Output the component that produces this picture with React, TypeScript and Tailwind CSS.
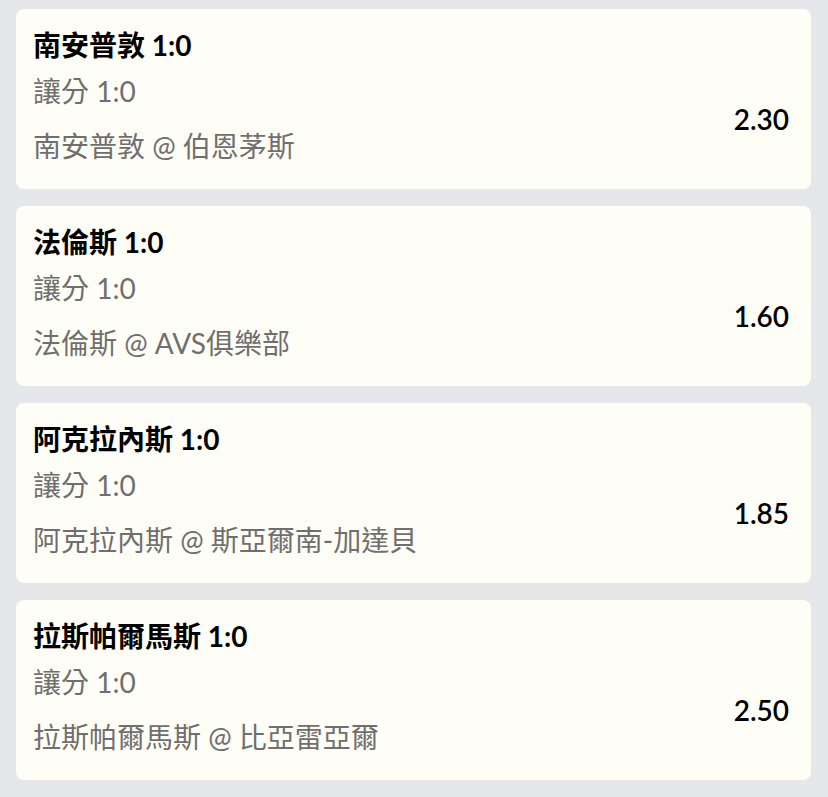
const bets = [
  { title: '南安普敦 1:0', market: '讓分 1:0', match: '南安普敦 @ 伯恩茅斯', odds: '2.30' },
  { title: '法倫斯 1:0', market: '讓分 1:0', match: '法倫斯 @ AVS俱樂部', odds: '1.60' },
  { title: '阿克拉內斯 1:0', market: '讓分 1:0', match: '阿克拉內斯 @ 斯亞爾南-加達貝', odds: '1.85' },
  { title: '拉斯帕爾馬斯 1:0', market: '讓分 1:0', match: '拉斯帕爾馬斯 @ 比亞雷亞爾', odds: '2.50' },
];

const BetCard = ({ title, market, match, odds }: (typeof bets)[number]) => (
  <div className="h-[180px] rounded-lg bg-[#fffef6] pl-[17px] pr-[22px] pt-[18px]">
    <div className="text-[28px] leading-[36px] font-bold text-black">{title}</div>
    <div className="mt-[10px] flex items-center justify-between">
      <div className="text-[28px] leading-[36px] text-[#6f6f6f]">
        <div>{market}</div>
        <div className="mt-[19px]">{match}</div>
      </div>
      <div className="text-[28px] leading-[36px] font-semibold text-black">{odds}</div>
    </div>
  </div>
);

export default function App() {
  return (
    <div
      className="min-h-screen bg-[#e6e7ea] pl-[16px] pr-[17px] pt-[9px] pb-[18px]"
      style={{ fontFamily: 'Lato, "Noto Sans CJK TC", sans-serif' }}
    >
      <div className="flex flex-col gap-[17px]">
        {bets.map((b) => (
          <BetCard key={b.title} {...b} />
        ))}
      </div>
    </div>
  );
}
